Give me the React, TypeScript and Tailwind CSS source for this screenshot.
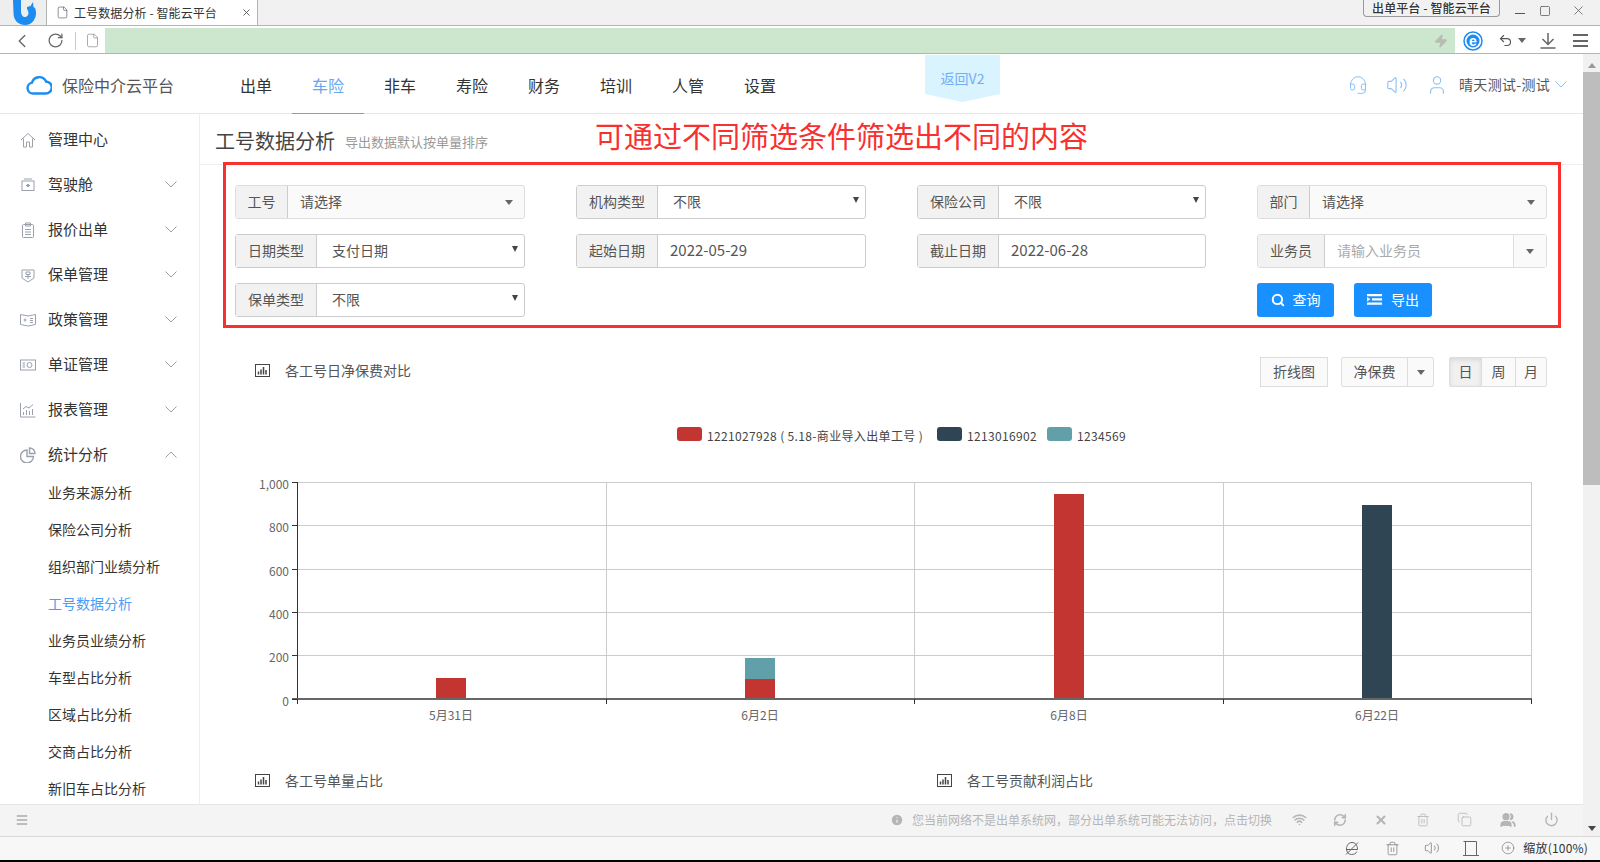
import type { ReactNode } from 'react'
import { RotateCw, ChevronLeft, File, Zap, Search, Wifi, RefreshCw, X, Trash2, Copy, Users, Power, Info, Menu, Volume2, User, Headset, Undo2, CirclePlus, Square } from 'lucide-react'

const navItems = ['出单', '车险', '非车', '寿险', '财务', '培训', '人管', '设置']

const Caret = ({ color = 'border-t-[#666]' }: { color?: string }) => (
  <span className={`block w-0 h-0 border-x-[4px] border-x-transparent border-t-[5px] ${color}`} />
)

const Chevron = ({ up }: { up?: boolean }) => (
  <svg width="12" height="7" viewBox="0 0 12 7" fill="none" stroke="#9aa0ad" strokeWidth="1">
    <path d={up ? 'M0.5 6.5 6 1l5.500 5.500' : 'M0.5 0.5 6 6l5.500-5.500'} />
  </svg>
)

// sidebar line icons, drawn in a 16 box
const sideIcons: Record<string, ReactNode> = {
  home: <path d="M1 8 8 1.500 15 8M3.500 6.500V15H6.500V10H9.500V15H12.500V6.500" />,
  cabin: <><rect x="2" y="4" width="12" height="9.500" /><path d="M4 2h8M6 8.500h4" /><circle cx="8" cy="8.500" r="1.200" /></>,
  clip: <><rect x="2.500" y="2.500" width="11" height="13" rx="1" /><path d="M5.500 1h5v3h-5zM5 7.500h6M5 10h6M5 12.500h6" /></>,
  shield: <><path d="M2 3h12v8l-6 4-6-4z" /><path d="M6 5h4v2.500H6zM5 9.500h6M8 7.500v4.500" /></>,
  book: <><path d="M0.500 2.500 8 4l7.500-1.500v10L8 14 0.500 12.500z" /><path d="M10 6.500h3M10 8.500h3M10 10.500h3" /><circle cx="5" cy="8" r="1" /></>,
  cert: <><rect x="0.500" y="3" width="15" height="10" /><circle cx="9.500" cy="8" r="2.500" /><path d="M2.500 6h2.500M2.500 8h2.500M2.500 10h2.500" /></>,
  chart: <path d="M0.500 1v14h15M3.500 13V10M6.500 13V8M9.500 13V9M12.500 13V7M3 7l3-2.500 3 1.500 4-3.500" />,
  pie: <><path d="M7 3a6.500 6.500 0 1 0 6.500 6.500H7z" strokeWidth="1.400" /><path d="M9.500 1v5.500H15A5.500 5.500 0 0 0 9.500 1z" strokeWidth="1.400" /></>,
}

const sideMenu = [
  { label: '管理中心', icon: 'home' },
  { label: '驾驶舱', icon: 'cabin', arrow: true },
  { label: '报价出单', icon: 'clip', arrow: true },
  { label: '保单管理', icon: 'shield', arrow: true },
  { label: '政策管理', icon: 'book', arrow: true },
  { label: '单证管理', icon: 'cert', arrow: true },
  { label: '报表管理', icon: 'chart', arrow: true },
  { label: '统计分析', icon: 'pie', arrow: true, open: true },
]

const subMenu = ['业务来源分析', '保险公司分析', '组织部门业绩分析', '工号数据分析', '业务员业绩分析', '车型占比分析', '区域占比分析', '交商占比分析', '新旧车占比分析']

const Label = ({ w, children }: { w: string; children: ReactNode }) => (
  <span className={`${w} shrink-0 h-full flex items-center justify-center bg-[#f2f2f2] border-r border-[#ccc] text-[14px] text-[#555] pb-[1px]`}>
    {children}
  </span>
)

// native looking select with a small black arrow
const SelectField = ({ label, value, w = 'w-[81px]' }: { label: string; value: string; w?: string }) => (
  <div className="h-[34px] flex items-center border border-[#ccc] rounded-[3px] bg-white">
    <Label w={w}>{label}</Label>
    <span className="flex-1 pl-[15px] text-[14px] text-[#555] pb-[1px]">{value}</span>
    <span className="mr-[6px] mb-[4px]"><span className="block w-0 h-0 border-x-[3px] border-x-transparent border-t-[6px] border-t-[#444]" /></span>
  </div>
)

const PickField = ({ label, w }: { label: string; w: string }) => (
  <div className="h-[34px] flex items-center border border-[#ddd] rounded-[3px] bg-[#fafafa]">
    <Label w={w}>{label}</Label>
    <span className="flex-1 pl-[12px] text-[14px] text-[#555] pb-[2px]">请选择</span>
    <span className="mr-[11px] mt-[1px]"><Caret /></span>
  </div>
)

const DateField = ({ label, value }: { label: string; value: string }) => (
  <div className="h-[34px] flex items-center border border-[#ccc] rounded-[3px] bg-white">
    <Label w="w-[81px]">{label}</Label>
    <span className="flex-1 pl-[12px] text-[15px] text-[#555] pb-[2px]">{value}</span>
  </div>
)

const BarIcon = () => (
  <svg width="15" height="13" viewBox="0 0 15 13" fill="none" stroke="#444" className="shrink-0">
    <rect x="0.5" y="0.5" width="14" height="12" />
    <path d="M3.500 10.500V7.500M6 10.500V5.500M8.500 10.500V3M11 10.500V6" strokeWidth="1.500" />
  </svg>
)

const ChartTitle = ({ text }: { text: string }) => (
  <div className="flex items-center gap-[15px] text-[14px] text-[#555]">
    <BarIcon />
    <span>{text}</span>
  </div>
)

const yTicks = [
  { v: '1,000', y: 482 },
  { v: '800', y: 525 },
  { v: '600', y: 569 },
  { v: '400', y: 612 },
  { v: '200', y: 655 },
  { v: '0', y: 699 },
]
const xLines = [297, 606, 914, 1223, 1531]
const xLabels = [
  { t: '5月31日', x: 451 },
  { t: '6月2日', x: 760 },
  { t: '6月8日', x: 1069 },
  { t: '6月22日', x: 1377 },
]
const bars = [
  { x: 436, y: 678, h: 21, c: '#c23531' },
  { x: 745, y: 679, h: 20, c: '#c23531' },
  { x: 745, y: 658, h: 21, c: '#61a0a8' },
  { x: 1054, y: 494, h: 205, c: '#c23531' },
  { x: 1362, y: 505, h: 194, c: '#2f4554' },
]

const Chart = () => (
  <svg width="1383" height="340" viewBox="200 410 1383 340" className="block mt-[23px]" fontFamily="'Noto Sans CJK SC', sans-serif">
    {/* legend */}
    <rect x="677" y="427" width="25" height="14" rx="3" fill="#c23531" />
    <text x="707" y="441" fontSize="12" fill="#444" letterSpacing="0.35">1221027928 ( 5.18-商业导入出单工号 )</text>
    <rect x="937" y="427" width="25" height="14" rx="3" fill="#2f4554" />
    <text x="967" y="441" fontSize="12" fill="#444" letterSpacing="0.35">1213016902</text>
    <rect x="1047" y="427" width="25" height="14" rx="3" fill="#61a0a8" />
    <text x="1077" y="441" fontSize="12" fill="#444" letterSpacing="0.35">1234569</text>
    {/* grid */}
    {yTicks.slice(0, 5).map((t) => (
      <line key={t.y} x1="297" x2="1531" y1={t.y + 0.5} y2={t.y + 0.5} stroke="#ccc" />
    ))}
    {xLines.slice(1).map((x) => (
      <line key={x} x1={x + 0.5} x2={x + 0.5} y1="482" y2="699" stroke="#ccc" />
    ))}
    {bars.map((b) => (
      <rect key={b.x + b.c} x={b.x} y={b.y} width="30" height={b.h} fill={b.c} />
    ))}
    {/* axes */}
    <line x1="297.5" x2="297.5" y1="482" y2="704" stroke="#333" />
    <line x1="292" x2="1532" y1="699" y2="699" stroke="#666" strokeWidth="2" />
    {yTicks.map((t) => (
      <g key={t.v}>
        <line x1="292" x2="297" y1={t.y + 0.5} y2={t.y + 0.5} stroke="#333" />
        <text x="289" y={t.y + 7} fontSize="12" fill="#666" textAnchor="end">{t.v}</text>
      </g>
    ))}
    {xLines.map((x) => (
      <line key={x} x1={x + 0.5} x2={x + 0.5} y1="699" y2="704" stroke="#333" />
    ))}
    {xLabels.map((l) => (
      <text key={l.t} x={l.x} y="720" fontSize="12" fill="#666" textAnchor="middle">{l.t}</text>
    ))}
  </svg>
)

export default function App() {
  return (
    <div className="w-[1600px] h-[862px] overflow-hidden flex flex-col bg-white text-[#333] font-['Noto_Sans_CJK_SC','Liberation_Sans',sans-serif]">
      {/* browser tab strip */}
      <div className="h-[26px] shrink-0 flex bg-[#f1f1f1] border-b border-[#b4b4b4]">
        <div className="w-[47px] h-[25px] bg-[#eeeeee] border-r border-[#b4b4b4]">
          <svg width="47" height="25" viewBox="0 0 47 25">
            <path d="M13 0h8v11c0 4 2 6 4 6s3.500-2 3.500-4c0-2.500-2-3.500-1.500-6l3.500-1 2.500-4 .5 5 1.500 1c2 5 1 10-2 13.500-2 2.500-5 3.500-8 3.500-7 0-11.500-5-11.500-12z" fill="#1c8cf0" />
          </svg>
        </div>
        <div className="w-[211px] h-[25px] flex items-center bg-white border-r border-[#b4b4b4] pl-[9px] text-[12px] text-[#333]">
          <File size={13} strokeWidth={1.200} className="text-[#555]" />
          <span className="ml-[5px] tracking-[0.1px] whitespace-nowrap">工号数据分析 - 智能云平台</span>
          <X size={11} className="ml-auto mr-[5px] text-[#555]" />
        </div>
        <div className="flex-1 flex justify-end items-start">
          <span className="h-[17px] w-[137px] flex items-center justify-center border border-t-0 border-[#999] rounded-b-[4px] text-[12px] text-[#333] tracking-[0.1px] font-medium [text-shadow:0_0_2px_#fff,0_0_2px_#fff]">出单平台 - 智能云平台</span>
          <div className="w-[100px] flex items-center text-[#555] pt-[3px] pl-[15px]">
            <span className="w-[10px] h-[1px] bg-[#555] mt-[5px]" />
            <Square size={12} strokeWidth={1.500} className="ml-[14px]" />
            <X size={15} strokeWidth={1.200} className="ml-[20px]" />
          </div>
        </div>
      </div>

      {/* url row */}
      <div className="h-[28px] shrink-0 flex items-stretch border-b border-[#b4b4b4] bg-white pt-[2px]">
        <div className="w-[105px] flex items-center text-[#666]">
          <ChevronLeft size={22} strokeWidth={1.500} className="ml-[11px]" />
          <RotateCw size={17} strokeWidth={1.800} className="ml-[14px]" />
          <span className="w-px h-[18px] bg-[#ccc] ml-[11px]" />
          <File size={15} strokeWidth={1.100} className="ml-[9px] text-[#888]" />
        </div>
        <div className="w-[1350px] bg-[#cde7cf] flex items-center justify-end pr-[7px]">
          <Zap size={14} className="text-[#b5bdb5] fill-[#b5bdb5]" />
        </div>
        <div className="flex-1 flex items-center text-[#555]">
          <svg width="20" height="20" viewBox="0 0 20 20" className="ml-[8px]" fontFamily="'Liberation Sans', sans-serif">
            <circle cx="10" cy="10" r="9" fill="#fff" stroke="#1c8cf0" strokeWidth="1.500" />
            <circle cx="10" cy="10" r="6.500" fill="#1c8cf0" />
            <text x="10" y="14.500" fontSize="14" fontWeight="700" fill="#fff" textAnchor="middle">e</text>
          </svg>
          <Undo2 size={15} strokeWidth={1.800} className="ml-[15px]" />
          <span className="ml-[5px] mb-[1px]"><Caret /></span>
          <svg width="16" height="16" viewBox="0 0 16 16" fill="none" stroke="#666" strokeWidth="1.500" className="ml-[14px]">
            <path d="M8 0v11M2.500 6 8 11.500 13.500 6M0.500 15h15" />
          </svg>
          <div className="ml-[17px] flex flex-col gap-[3.500px]">
            <span className="w-[15px] h-[2px] bg-[#666]" />
            <span className="w-[15px] h-[2px] bg-[#666]" />
            <span className="w-[15px] h-[2px] bg-[#666]" />
          </div>
        </div>
      </div>

      <div className="flex-1 min-h-0 flex">
        <div className="w-[1583px] flex flex-col min-h-0">
          {/* app nav */}
          <div className="relative h-[60px] shrink-0 flex items-stretch border-b border-[#e6e6e6]">
            <div className="w-[220px] flex items-center pl-[26px] pt-[2px]">
              <svg width="26" height="20" viewBox="0 0 26 20" fill="none" stroke="#1c8cf0" strokeWidth="2.400">
                <path d="M7 18.500a5.500 5.500 0 0 1-1-10.900A7.500 7.500 0 0 1 20 6.500a6 6 0 0 1-.5 12z" />
              </svg>
              <span className="ml-[10px] text-[16px] text-[#555] whitespace-nowrap">保险中介云平台</span>
            </div>
            {navItems.map((n) => (
              <div key={n} className={`w-[72px] flex items-center justify-center pt-[2px] text-[16px] ${n === '车险' ? 'text-[#6aa5f0] border-b border-[#6aa5f0] -mb-px' : 'text-[#333]'}`}>
                {n}
              </div>
            ))}
            <div className="ml-auto flex items-center pr-[16px] pt-[2px] text-[#8cc0f8]">
              <Headset size={20} strokeWidth={1.200} />
              <Volume2 size={22} strokeWidth={1.200} className="ml-[18px]" />
              <User size={22} strokeWidth={1.200} className="ml-[18px]" />
              <span className="ml-[11px] text-[14px] tracking-[0.3px] text-[#555] whitespace-nowrap">晴天测试-测试</span>
              <svg width="12" height="7" viewBox="0 0 12 7" fill="none" stroke="#8cc0f8" className="ml-[5px]"><path d="M0.5 0.500 6 6l5.500-5.500" /></svg>
            </div>
            {/* back to v2 tag */}
            <div className="absolute left-[925px] top-[1px] w-[75px] h-[47px] bg-[#d9f3ff] [clip-path:polygon(0_0,100%_0,100%_83%,50%_100%,0_83%)] flex items-center justify-center text-[14px] text-[#73aef5]">
              返回V2
            </div>
          </div>

          <div className="flex-1 min-h-0 flex overflow-hidden">
            {/* sidebar */}
            <div className="w-[200px] shrink-0 border-r border-[#eee] pt-[3px] overflow-hidden">
              {sideMenu.map((m) => (
                <div key={m.label} className="h-[45px] flex items-center pl-[20px] pr-[22px]">
                  <svg width="16" height="16" viewBox="0 0 16 16" fill="none" stroke="#9aa0ad" className="shrink-0">
                    {sideIcons[m.icon]}
                  </svg>
                  <span className="ml-[12px] flex-1 text-[15px] text-[#333]">{m.label}</span>
                  {m.arrow && <Chevron up={m.open} />}
                </div>
              ))}
              <div className="mt-[-3px]">
                {subMenu.map((s) => (
                  <div key={s} className={`h-[37px] flex items-center pl-[48px] text-[14px] whitespace-nowrap ${s === '工号数据分析' ? 'text-[#4a9df8]' : 'text-[#333]'}`}>
                    {s}
                  </div>
                ))}
              </div>
            </div>

            {/* main content */}
            <div className="relative flex-1 min-w-0 overflow-hidden">
              <div className="h-[51px] flex items-center border-b border-[#eee] pl-[15px] pt-[3px]">
                <span className="text-[20px] text-[#444]">工号数据分析</span>
                <span className="ml-[10px] mt-[3px] text-[13px] text-[#999]">导出数据默认按单量排序</span>
              </div>
              {/* red annotation */}
              <div className="absolute left-[395px] top-[2px] text-[29px] leading-[38px] text-[#f83030] whitespace-nowrap">可通过不同筛选条件筛选出不同的内容</div>

              <div className="relative ml-[23px] mt-[-3px] w-[1338px] h-[166px] border-[3px] border-[#f83030] pt-[20px] pl-[9px]">
                <div className="grid grid-cols-[290px_290px_289px_290px] gap-x-[51px] gap-y-[15px]">
                  <PickField label="工号" w="w-[52px]" />
                  <SelectField label="机构类型" value="不限" />
                  <SelectField label="保险公司" value="不限" />
                  <PickField label="部门" w="w-[52px]" />
                  <SelectField label="日期类型" value="支付日期" />
                  <DateField label="起始日期" value="2022-05-29" />
                  <DateField label="截止日期" value="2022-06-28" />
                  <div className="h-[34px] flex items-center border border-[#ddd] rounded-[3px] bg-white">
                    <Label w="w-[67px]">业务员</Label>
                    <span className="flex-1 pl-[12px] text-[14px] text-[#aaa] pb-[1px]">请输入业务员</span>
                    <span className="w-[33px] h-full flex items-center justify-center bg-[#fafafa] border-l border-[#ddd]"><Caret /></span>
                  </div>
                  <SelectField label="保单类型" value="不限" />
                  <div className="col-start-4 flex gap-[20px]">
                    <button className="w-[77px] h-[34px] flex items-center justify-center gap-[8px] rounded-[3px] bg-[#1890ff] text-white text-[14px] pb-[1px]">
                      <Search size={14} strokeWidth={3.400} />查询
                    </button>
                    <button className="w-[78px] h-[34px] flex items-center justify-center gap-[9px] rounded-[3px] bg-[#1890ff] text-white text-[14px] pb-[1px]">
                      <svg width="15" height="11" viewBox="0 0 15 11" fill="#fff"><path d="M0 0h15v2.200H0zM5 4.200h10v2.200H5zM0 8.500h15v2.200H0zM0 3l3.500 2.300L0 7.600z" /></svg>
                      导出
                    </button>
                  </div>
                </div>
              </div>

              {/* daily premium chart */}
              <div className="mt-[29px] h-[30px] flex items-center pl-[55px] pr-[36px]">
                <div className="pb-[4px]"><ChartTitle text="各工号日净保费对比" /></div>
                <div className="ml-auto flex items-stretch h-[30px] text-[14px] text-[#555]">
                  <span className="w-[68px] flex items-center justify-center bg-[#fafafa] border border-[#ddd] pb-[1px]">折线图</span>
                  <div className="ml-[13px] flex border border-[#ddd] rounded-[2px] bg-[#fafafa]">
                    <span className="w-[66px] flex items-center justify-center border-r border-[#ddd] pb-[1px]">净保费</span>
                    <span className="w-[25px] flex items-center justify-center"><Caret /></span>
                  </div>
                  <div className="ml-[15px] flex border border-[#ddd] rounded-[2px] bg-[#fafafa]">
                    <span className="w-[32px] flex items-center justify-center bg-[#f0f0f0] shadow-[inset_0_2px_4px_rgba(0,0,0,0.1)] border-r border-[#ddd] pb-[1px]">日</span>
                    <span className="w-[34px] flex items-center justify-center border-r border-[#ddd] pb-[1px]">周</span>
                    <span className="w-[30px] flex items-center justify-center pb-[1px]">月</span>
                  </div>
                </div>
              </div>

              <Chart />

              <div className="mt-[20px] flex">
                <div className="w-[737px] pl-[55px]"><ChartTitle text="各工号单量占比" /></div>
                <div><ChartTitle text="各工号贡献利润占比" /></div>
              </div>
            </div>
          </div>

          {/* app footer */}
          <div className="h-[32px] shrink-0 flex items-center bg-[#f4f4f4] border-t border-[#e6e6e6] pl-[15px] pb-[2px] text-[#b5b5b5]">
            <Menu size={14} strokeWidth={2.600} className="text-[#aaa]" />
            <div className="ml-auto flex items-center pr-[24px]">
              <Info size={14} fill="#b5b5b5" stroke="#f4f4f4" />
              <span className="ml-[8px] text-[12px] whitespace-nowrap">您当前网络不是出单系统网，部分出单系统可能无法访问，点击切换</span>
              <Wifi size={15} strokeWidth={2.600} className="ml-[20px]" />
              <RefreshCw size={14} strokeWidth={2.800} className="ml-[26px]" />
              <X size={14} strokeWidth={3.600} className="ml-[27px]" />
              <Trash2 size={14} strokeWidth={1.400} className="ml-[28px]" />
              <Copy size={15} strokeWidth={1.300} className="ml-[27px]" />
              <Users size={16} strokeWidth={2.800} fill="#b5b5b5" className="ml-[28px]" />
              <Power size={15} strokeWidth={2.200} className="ml-[28px]" />
            </div>
          </div>
        </div>

        {/* page scrollbar */}
        <div className="w-[17px] shrink-0 bg-[#f1f1f1] flex flex-col items-center">
          <span className="mt-[9px] w-0 h-0 border-x-[4px] border-x-transparent border-b-[5px] border-b-[#999]" />
          <span className="mt-[4px] w-full h-[413px] bg-[#bdbdbd]" />
          <span className="mt-auto mb-[5px] w-0 h-0 border-x-[4px] border-x-transparent border-t-[5px] border-t-[#444]" />
        </div>
      </div>

      {/* browser status bar */}
      <div className="h-[24px] shrink-0 flex items-center justify-end bg-[#f7f7f7] border-t border-[#d8d8d8] text-[#666] pr-[12px] pb-[1px]">
        <svg width="14" height="15" viewBox="0 0 14 15" fill="none" stroke="#666">
          <path d="M1 8.500h11.500C12.500 4 10 1.500 7 1.500S1.500 4 1.500 8c0 3 2 5.500 5 5.500 2.500 0 4.500-1 5.500-3M13 1.500 1 13.500" />
        </svg>
        <Trash2 size={15} strokeWidth={1} className="ml-[26px]" />
        <Volume2 size={16} strokeWidth={1} className="ml-[24px]" />
        <svg width="16" height="15" viewBox="0 0 16 15" fill="none" stroke="#666" className="ml-[23px]">
          <path d="M0.500 0.500H13.500V14M2.500 0.500V14M0 14.500H16" />
        </svg>
        <CirclePlus size={14} strokeWidth={1} className="ml-[22px]" />
        <span className="ml-[8px] text-[12px] tracking-[0.2px] text-[#333] whitespace-nowrap">缩放(100%)</span>
      </div>
      <div className="h-[2px] shrink-0 bg-black" />
    </div>
  )
}
